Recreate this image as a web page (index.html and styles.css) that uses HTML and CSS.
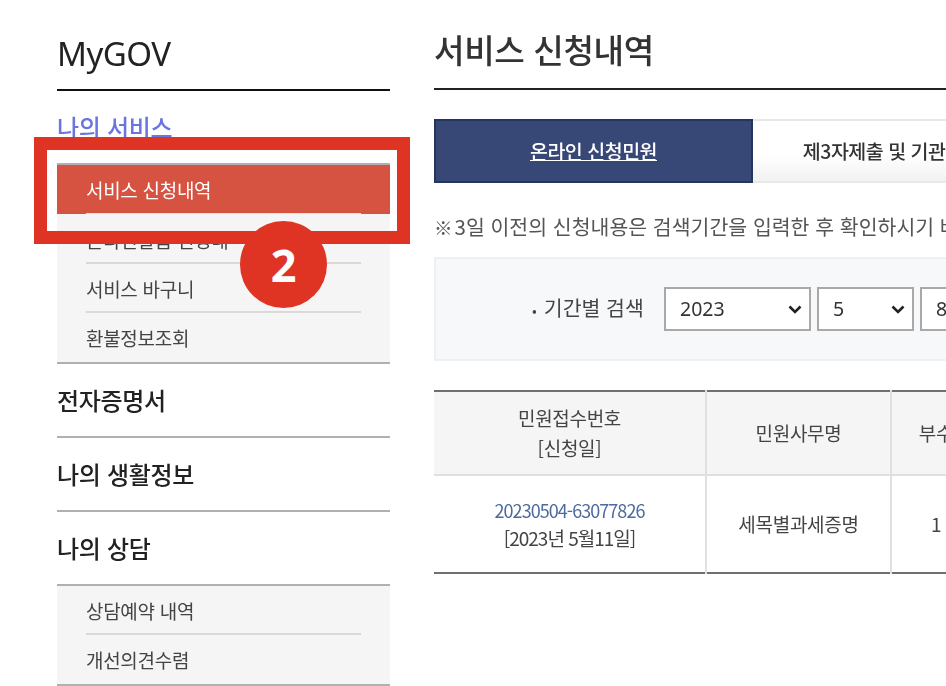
FILE: index.html
```html
<!DOCTYPE html>
<html lang="ko">
<head>
<meta charset="utf-8">
<title>서비스 신청내역</title>
<link rel="stylesheet" href="styles.css">
</head>
<body>
<div class="page">
  <aside class="side">
    <h2 class="brand">MyGOV</h2>
    <div class="sec">
      <h3 class="sec-title sec-current">나의 서비스</h3>
      <ul class="sub">
        <li class="sub-item active">서비스 신청내역</li>
        <li class="sub-item">온라인발급 신청내</li>
        <li class="sub-item">서비스 바구니</li>
        <li class="sub-item">환불정보조회</li>
      </ul>
    </div>
    <div class="sec"><h3 class="sec-title">전자증명서</h3></div>
    <div class="sec"><h3 class="sec-title">나의 생활정보</h3></div>
    <div class="sec">
      <h3 class="sec-title">나의 상담</h3>
      <ul class="sub">
        <li class="sub-item">상담예약 내역</li>
        <li class="sub-item">개선의견수렴</li>
      </ul>
    </div>
  </aside>
  <main class="main">
    <h1 class="title">서비스 신청내역</h1>
    <div class="tabs">
      <div class="tab tab-on">온라인 신청민원</div>
      <div class="tab tab-off">제3자제출 및 기관제출 민원</div>
    </div>
    <p class="note"><span class="mark">※</span>3일 이전의 신청내용은 검색기간을 입력한 후 확인하시기 바랍니다.</p>
    <div class="search">
      <span class="search-label"><span class="dot">•</span>기간별 검색</span>
      <select class="sel sel-year"><option>2023</option></select>
      <select class="sel sel-month"><option>5</option></select>
      <select class="sel sel-day"><option>8</option></select>
    </div>
    <table class="grid">
      <thead>
        <tr>
          <th class="c1">민원접수번호<br>[신청일]</th>
          <th class="c2">민원사무명</th>
          <th class="c3">부수</th>
          <th class="c4">처리상태</th>
        </tr>
      </thead>
      <tbody>
        <tr>
          <td class="tight"><a class="num">20230504-63077826</a><br>[2023년 5월11일]</td>
          <td>세목별과세증명</td>
          <td>1</td>
          <td>처리완료</td>
        </tr>
      </tbody>
    </table>
  </main>
</div>
<div class="callout"></div>
<div class="badge">2</div>
</body>
</html>
```
FILE: styles.css
```css
html, body { margin: 0; padding: 0; }
body {
  width: 946px;
  height: 686px;
  overflow: hidden;
  position: relative;
  background: #fff;
  color: #333;
  font-family: "Noto Sans CJK KR", "Noto Sans", sans-serif;
}
.page {
  display: flex;
  gap: 44px;
  padding-left: 57px;
  width: 1300px;
  filter: blur(0.35px);
}
.side { width: 333px; flex: none; }
.brand {
  margin: 0;
  height: 91px;
  box-sizing: border-box;
  border-bottom: 2px solid #111;
  font-size: 33px;
  font-weight: 400;
  line-height: 48px;
  padding-top: 30px;
  color: #222;
  font-family: "Noto Sans", sans-serif;
  letter-spacing: -0.5px;
}
.sec { border-bottom: 2px solid #b0b0b0; }
.sec-title {
  margin: 0;
  height: 72px;
  font-size: 24px;
  line-height: 71px;
  font-weight: 500;
  color: #222;
  letter-spacing: -0.3px;
}
.sec-current { color: #6a75e0; }
.sub {
  list-style: none;
  margin: 0;
  padding: 0 29px;
  background: #f5f5f5;
  border-top: 2px solid #b0b0b0;
}
.sub-item {
  height: 47px;
  border-bottom: 2px solid #d9d9d9;
  font-size: 19px;
  line-height: 49px;
  color: #444;
  letter-spacing: -0.3px;
}
.sub-item:last-child { border-bottom: 0; height: 49px; }
.active {
  margin: 0 -29px;
  padding: 0 29px;
  background: linear-gradient(#d65241 49px, transparent 49px);
  color: #fff;
  border-bottom: 0;
  height: 50px;
  line-height: 50px;
}
.active::after {
  content: "";
  display: block;
  height: 1px;
  margin-top: -2px;
  background: #ece2df;
}
.main { flex: none; width: 860px; }
.title {
  margin: 0;
  height: 90px;
  box-sizing: border-box;
  border-bottom: 2px solid #222;
  font-size: 33.2px;
  font-weight: 500;
  line-height: 46px;
  padding-top: 26px;
  color: #333;
  letter-spacing: -0.4px;
}
.tabs { display: flex; margin-top: 29px; height: 64px; }
.tab {
  box-sizing: border-box;
  width: 319px;
  text-align: center;
  font-size: 19.5px;
  font-weight: 500;
  line-height: 60px;
  letter-spacing: -0.5px;
}
.tab-on {
  background: #374876;
  border: 2px solid #26355e;
  color: #fff;
  text-decoration: underline;
}
.tab-off {
  border: 2px solid #e8e8e8;
  border-left: 0;
  color: #333;
  background: linear-gradient(#fff 55%, #f2f2f2);
}
.note {
  margin: 30px 0 0;
  font-size: 20.5px;
  line-height: 26px;
  color: #555;
  white-space: nowrap;
}
.mark { font-size: 18.5px; margin-right: 2px; }
.search {
  display: flex;
  align-items: center;
  margin-top: 17px;
  height: 104px;
  box-sizing: border-box;
  background: #f7f8fa;
  border: 2px solid #eff0f2;
  padding-left: 96px;
  width: 800px;
}
.search-label { font-size: 20.5px; line-height: 26px; margin-top: -1px; color: #444; width: 132px; flex: none; white-space: nowrap; }
.dot { margin-right: 7px; font-size: 14px; }
.sel {
  appearance: none;
  box-sizing: border-box;
  height: 44px;
  margin-right: 6px;
  padding: 0 0 1px 14px;
  background-color: #fff;
  background-image: url("data:image/svg+xml,%3Csvg xmlns='http://www.w3.org/2000/svg' width='14' height='9'%3E%3Cpath d='M1.5 1.5 7 7l5.500-5.500' fill='none' stroke='%23222' stroke-width='2.600'/%3E%3C/svg%3E");
  background-repeat: no-repeat;
  background-position: right 7px center;
  border: 2px solid #a9a9a9;
  border-radius: 0;
  font-family: "Noto Sans", sans-serif;
  font-size: 19.5px;
  color: #333;
  flex: none;
}
.sel-year { width: 147px; }
.sel-month { width: 97px; }
.sel-day { width: 98px; }
.grid {
  margin-top: 29px;
  width: 800px;
  border-collapse: collapse;
  border-top: 2px solid #707070;
  border-bottom: 2px solid #707070;
  table-layout: fixed;
  font-size: 19px;
  color: #444;
  text-align: center;
}
.grid th, .grid td {
  font-weight: 400;
  border-left: 2px solid #e0e0e0;
  line-height: 30px;
  padding: 0;
  letter-spacing: -0.3px;
}
.grid th:first-child, .grid td:first-child { border-left: 0; }
.grid th { background: #f5f5f5; height: 82px; border-bottom: 2px solid #e0e0e0; }
.grid td { height: 96px; }
.grid .tight { line-height: 28px; letter-spacing: -1px; }
.c1 { width: 271px; }
.c2 { width: 183px; }
.c3 { width: 88px; }
.num { color: #4f6a9f; font-size: 18px; letter-spacing: -0.95px; }
.callout {
  position: absolute;
  left: 34px;
  top: 137px;
  width: 376px;
  height: 107px;
  box-sizing: border-box;
  border: 13px solid #df3423;
}
.badge {
  position: absolute;
  left: 240px;
  top: 221px;
  width: 87px;
  height: 87px;
  border-radius: 50%;
  background: #df3423;
  color: #fff;
  font-family: "Noto Sans", sans-serif;
  font-size: 45px;
  font-weight: 700;
  line-height: 87px;
  text-align: center;
}
```
